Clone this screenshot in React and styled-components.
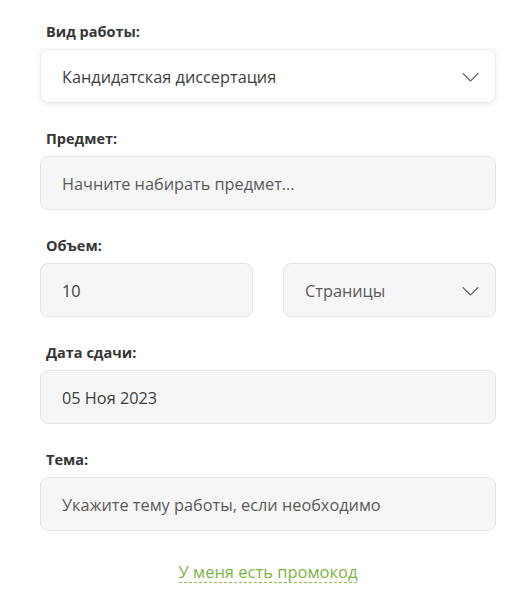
import React from 'react';
import styled, { createGlobalStyle } from 'styled-components';

const GlobalStyle = createGlobalStyle`
  body {
    margin: 0;
    background: #ffffff;
    font-family: "Open Sans", "Noto Sans", sans-serif;
  }
`;

const Form = styled.div`
  width: 456px;
  padding: 22px 0 0 40px;
  display: flex;
  flex-direction: column;
`;

const Group = styled.div`
  display: flex;
  flex-direction: column;
  margin-bottom: 26px;
`;

const Label = styled.div`
  font-size: 14.5px;
  font-weight: 700;
  color: #363636;
  line-height: 20px;
  padding-left: 6px;
  margin-bottom: 7px;
`;

const Row = styled.div`
  display: grid;
  grid-template-columns: 213px 213px;
  column-gap: 30px;
`;

const Field = styled.div`
  box-sizing: border-box;
  height: 54px;
  display: flex;
  align-items: center;
  justify-content: space-between;
  padding: 1px 16px 0 21px;
  border-radius: 8px;
  font-size: 16.3px;
  color: ${p => (p.placeholder ? '#5a5a5a' : '#3d3d3d')};
  background: ${p => (p.raised ? '#ffffff' : '#f6f6f6')};
  border: 1px solid ${p => (p.raised ? '#ececec' : '#e4e4e4')};
  box-shadow: ${p => (p.raised ? '0 2px 6px rgba(0, 0, 0, 0.08)' : 'none')};
`;

const Chevron = () => (
  <svg width="17" height="10" viewBox="0 0 17 10" fill="none">
    <path d="M1 1.5l7.5 7.5 7.5-7.5" stroke="#666" strokeWidth="1.1" strokeLinecap="round" strokeLinejoin="round" />
  </svg>
);

const Footer = styled.div`
  display: flex;
  justify-content: center;
  margin-top: 5px;
`;

const Promo = styled.a`
  font-size: 16.5px;
  color: #7db343;
  text-decoration: none;
  line-height: 20px;
  border-bottom: 1px dashed #8cbf55;
  cursor: pointer;
`;

export default function App() {
  return (
    <>
      <GlobalStyle />
      <Form>
        <Group>
          <Label>Вид работы:</Label>
          <Field raised>
            Кандидатская диссертация
            <Chevron />
          </Field>
        </Group>
        <Group>
          <Label>Предмет:</Label>
          <Field placeholder>Начните набирать предмет...</Field>
        </Group>
        <Group>
          <Label>Объем:</Label>
          <Row>
            <Field>10</Field>
            <Field placeholder>
              Страницы
              <Chevron />
            </Field>
          </Row>
        </Group>
        <Group>
          <Label>Дата сдачи:</Label>
          <Field>05 Ноя 2023</Field>
        </Group>
        <Group>
          <Label>Тема:</Label>
          <Field placeholder>Укажите тему работы, если необходимо</Field>
        </Group>
        <Footer>
          <Promo>У меня есть промокод</Promo>
        </Footer>
      </Form>
    </>
  );
}
